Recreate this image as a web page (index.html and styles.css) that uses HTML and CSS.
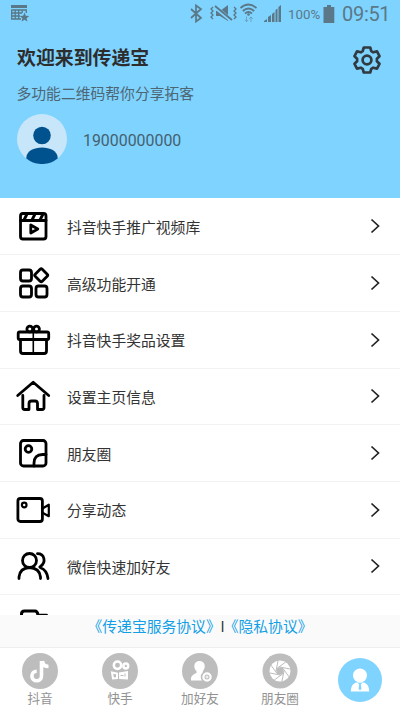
FILE: index.html
```html
<!DOCTYPE html>
<html lang="zh-CN">
<head>
<meta charset="utf-8">
<title>传递宝</title>
<link rel="stylesheet" href="styles.css">
</head>
<body>
<div class="screen">
  <header class="hero">
    <div class="status">
      <svg class="status-left" viewBox="0 0 20 20" width="20" height="20"><path d="M1 1h16v3H1z"/><path d="M1.700 5.500v9.500H11M1.700 6h14.600v3M1.700 9H12M1.700 12H10M5.200 6v9M8.700 6v9M12.200 6v3" fill="none" stroke="currentColor" stroke-width="1.300"/><path d="m14.500 8.500 1.300 3.200 3.400.2-2.600 2.300.8 3.400-2.900-1.900-2.900 1.900.8-3.400-2.600-2.300 3.400-.2z"/></svg>
      <svg class="status-icons" viewBox="188 0 100 28" width="100" height="28">
        <path d="m191 9 10 9-5 3.500v-16l5 3.500-10 9" fill="none" stroke="currentColor" stroke-width="1.700"/>
        <path d="M216 11h4l8-6v16l-8-5h-4z"/>
        <path d="m214.500 6.500 17 14" stroke="#7fd3ff" stroke-width="4"/>
        <path d="m215 6 17 14" stroke="currentColor" stroke-width="1.800"/>
        <path d="m213 7-2 2 2 2-2 2 2 2-2 2 2 2M234 7l2 2-2 2 2 2-2 2 2 2-2 2" fill="none" stroke="currentColor" stroke-width="1.300"/>
        <path d="M240.500 8q8-7 16 0M242.800 11q5.700-5 11.400 0M245 13.500q3.500-3 7 0" fill="none" stroke="currentColor" stroke-width="1.700"/><circle cx="248.500" cy="14.500" r="1.300"/>
        <path d="M246.500 16.500v5m-1.800-1.700 1.800 1.800 1.800-1.800M251 22v-5m-1.800 1.700L251 17l1.800 1.700" fill="none" stroke="currentColor" opacity=".5"/>
        <path d="M264 22v-1l3-2v3zM268 22v-5l3-2v7zM272 22v-8l2.500-2v10zM275.500 22V10l2-1.500V22zM278.500 22V7l2.500-2v17z"/>
      </svg>
      <span class="battery-text">100%</span>
      <svg class="battery" viewBox="0 0 12 18" width="12" height="18"><path d="M4 0h4v2h3.300v16H.5V2H4z"/></svg>
      <span class="clock">09:51</span>
    </div>
    <div class="title-row">
      <h1>欢迎来到传递宝</h1>
      <svg class="gear" viewBox="-15 -15 30 30" width="30" height="30"><path d="M-3.200-12.500H3.200L4.300-8.800 6.200-7.700 10-8.600 12.500-3.800 9.900-1.200V1.200L12.500 3.800 10 8.600 6.200 7.700 4.300 8.800 3.200 12.500H-3.200L-4.300 8.800-6.200 7.700-10 8.600-12.500 3.800-9.900 1.200V-1.200L-12.500-3.800-10-8.600-6.200-7.700-4.300-8.800Z"/><circle r="4.400"/></svg>
    </div>
    <p class="subtitle">多功能二维码帮你分享拓客</p>
    <div class="account">
      <svg viewBox="0 0 50 50" width="50" height="50"><circle cx="25" cy="25" r="25" fill="#c8e6fa"/><circle cx="25" cy="21.500" r="8.800" fill="#00528f"/><path d="M9.300 44.500C9 37 17 33.500 25 33.500S41 37 40.700 44.500A25 25 0 0 1 9.300 44.500Z" fill="#00528f"/></svg>
      <span>19000000000</span>
    </div>
  </header>

  <main class="menu">
    <div class="row"><svg class="icon" viewBox="0 0 36 36"><rect x="5.500" y="5.500" width="25.500" height="25.500" rx="2.500"/><path d="M5.500 12.500H31M12 6l-3 6M20 6l-3 6M28 6l-3 6M15.800 17v8l7-4z"/></svg><span>抖音快手推广视频库</span><svg class="chevron" viewBox="0 0 10 16"><path d="m1.500 1.500 7 6.500-7 6.500"/></svg></div>
    <div class="row"><svg class="icon" viewBox="0 0 36 36"><rect x="5.500" y="5" width="11" height="11" rx="2.500"/><rect x="5.500" y="21" width="11" height="11" rx="2.500"/><rect x="21" y="21" width="11" height="11" rx="2.500"/><rect x="21.200" y="5.200" width="10" height="10" rx="1.500" transform="rotate(45 26.200 10.200)"/></svg><span>高级功能开通</span><svg class="chevron" viewBox="0 0 10 16"><path d="m1.500 1.500 7 6.500-7 6.500"/></svg></div>
    <div class="row"><svg class="icon" viewBox="0 0 36 36"><rect x="3.200" y="10" width="30.500" height="7.500" rx="1.500"/><path d="M5.500 17.500V29q0 2.500 2.500 2.500h21q2.500 0 2.500-2.500V17.500"/><path class="thin" d="M18.300 10v21.500"/><circle cx="14.800" cy="7" r="2.900"/><circle cx="21.500" cy="7" r="2.900"/></svg><span>抖音快手奖品设置</span><svg class="chevron" viewBox="0 0 10 16"><path d="m1.500 1.500 7 6.500-7 6.500"/></svg></div>
    <div class="row"><svg class="icon" viewBox="0 0 36 36"><path d="M2.700 17.500 18.200 4.200l15.500 13.300M7.800 17.500v12q0 2 2 2H14v-6q0-2.500 2.500-2.500h3.500q2.500 0 2.500 2.500v6H27q2 0 2-2v-12"/></svg><span>设置主页信息</span><svg class="chevron" viewBox="0 0 10 16"><path d="m1.500 1.500 7 6.500-7 6.500"/></svg></div>
    <div class="row"><svg class="icon" viewBox="0 0 36 36"><rect x="5.500" y="5.500" width="25.500" height="25.500" rx="3"/><circle cx="13.500" cy="14" r="3.300"/><path d="M19 31V28q0-8.500 8.500-8.500H31"/></svg><span>朋友圈</span><svg class="chevron" viewBox="0 0 10 16"><path d="m1.500 1.500 7 6.500-7 6.500"/></svg></div>
    <div class="row"><svg class="icon" viewBox="0 0 36 36"><rect x="2.900" y="6.500" width="24.500" height="23" rx="2.500"/><circle class="mid" cx="9.200" cy="13" r="2.300"/><path class="mid" d="m27.500 16.500 6.300-3.800v11.500l-6.300-3.500"/></svg><span>分享动态</span><svg class="chevron" viewBox="0 0 10 16"><path d="m1.500 1.500 7 6.500-7 6.500"/></svg></div>
    <div class="row"><svg class="icon" viewBox="0 0 36 36"><circle cx="14.500" cy="12.500" r="7"/><path d="M4 30.500V29q1-9 10.500-9.500Q24.500 20 25.500 29v1.500M22.500 5.700c7 0 9 8.500 3 12.600-1 .7-1 1 0 1.400Q32 22 33 30.500"/></svg><span>微信快速加好友</span><svg class="chevron" viewBox="0 0 10 16"><path d="m1.500 1.500 7 6.500-7 6.500"/></svg></div>
    <div class="row"><svg class="icon" viewBox="0 0 36 36"><path class="heavy" d="M6.500 22V9Q6.500 6 9.500 6H20Q22.500 6 23 10.200h8.500"/></svg></div>
  </main>

  <div class="terms"><a>《传递宝服务协议》</a><span>l</span><a>《隐私协议》</a></div>

  <nav class="tabs">
    <div class="tab"><svg viewBox="0 0 36 36"><circle class="disc" cx="18" cy="18" r="18"/><path d="M19.500 8v15a4.800 4.800 0 1 1-4.800-4.800M20.500 8c.3 3.500 2.500 5.500 6 5.500" fill="none" stroke="#fff" stroke-width="3.600"/></svg><span>抖音</span></div>
    <div class="tab"><svg viewBox="0 0 36 36"><circle class="disc" cx="18" cy="18" r="18"/><g fill="none" stroke="#fff" stroke-width="2.500"><circle cx="15.500" cy="12.300" r="3.700"/><circle cx="23.800" cy="13" r="2.400"/></g><path d="m10 19.500 5 1v4.500l-4 .5z" fill="none" stroke="#fff" stroke-width="2"/><path fill="#fff" d="M17 19.500 26 18v8.500l-9-.5z"/><path d="M18.500 22.500h3M23 20.500v3" stroke="#bdbdbd"/></svg><span>快手</span></div>
    <div class="tab"><svg viewBox="0 0 36 36"><circle class="disc" cx="18" cy="18" r="18"/><path fill="#fff" d="M17.500 8c6 0 6.500 7 3.400 10v2c3 1 4 2 4 4v3.500H9V25q.5-3 5.500-5v-2C11 15 11.500 8 17.500 8z"/><circle cx="25" cy="24" r="5.500" fill="#fff" stroke="#bdbdbd" stroke-width="1.500"/><circle cx="25" cy="24" r="2.500" fill="#bdbdbd"/><path d="M23.500 24h3M25 22.500v3" stroke="#fff"/></svg><span>加好友</span></div>
    <div class="tab"><svg viewBox="0 0 36 36"><circle class="disc" cx="18" cy="18" r="17.500"/><circle cx="18" cy="18" r="10.500" fill="#fff"/><circle cx="18" cy="18" r="3.700" fill="#bdbdbd"/><path d="M14 18 16 8M15.200 15.200 23.500 9.200M18 14l10 2M20.800 15.200l6 8.300M22 18l-2 10M20.800 20.800l-8.300 6M18 22 8 20M15.200 20.800l-6-8.300" stroke="#bdbdbd" stroke-width="1"/></svg><span>朋友圈</span></div>
    <div class="tab active"><svg viewBox="0 0 44 44"><circle cx="22" cy="22" r="22" fill="#7fd3ff"/><circle cx="22" cy="17.500" r="7" fill="#fff"/><path fill="#fff" d="M12.800 33.500c.2-5 2-8.500 6.200-9h6c4.200.5 6 4 6.200 9z"/><path d="M20 25h4l-1.200 1.500.7 4-1.500 2-1.500-2 .7-4z" fill="#7fd3ff"/></svg></div>
  </nav>
</div>
</body>
</html>
```

FILE: styles.css
```css
* { box-sizing: border-box; }
body {
  margin: 0;
  font-family: Roboto, "Noto Sans CJK SC", sans-serif;
  background: #fff;
  color: #333;
}
.screen {
  width: 400px;
  height: 711px;
  display: flex;
  flex-direction: column;
  overflow: hidden;
}
.hero {
  height: 198px;
  flex: none;
  background: #7fd3ff;
}
.status {
  display: flex;
  align-items: center;
  height: 28px;
  padding: 0 11px 0 10px;
  color: #5a7887;
}
.status svg { fill: currentColor; flex: none; }
.status-icons { margin-left: auto; }
.battery-text { width: 31px; font-size: 13.3px; white-space: nowrap; }
.battery { margin: 0 7px 0 4px; }
.clock { width: 47px; font-size: 20px; line-height: 28px; letter-spacing: -.3px; white-space: nowrap; }
.title-row {
  display: flex;
  justify-content: space-between;
  align-items: center;
  height: 60px;
  padding: 0 18px 0 17px;
}
h1 { margin: 2px 0 0; font-size: 18.9px; line-height: 30px; font-weight: 700; color: #2d2d2d; }
.gear { fill: none; stroke: #303a40; stroke-width: 2.7; stroke-linejoin: round; margin-top: 4px; }
.subtitle { margin: -6px 0 0 16.5px; font-size: 14.8px; line-height: 24px; color: #4d6673; }
.account {
  display: flex;
  align-items: center;
  gap: 16px;
  margin: 8px 0 0 17px;
  font-size: 15.9px;
  color: #44616e;
}
.account span { margin-top: 2px; }
.menu { height: 417px; flex: none; overflow: hidden; padding-top: .6px; }
.row {
  display: flex;
  align-items: center;
  height: 56.67px;
  padding: 0 20px 0 15px;
  border-bottom: 1px solid #f2f2f2;
  font-size: 14.8px;
}
.icon {
  width: 36px;
  height: 36px;
  margin-right: 16px;
  flex: none;
  fill: none;
  stroke: #000;
  stroke-width: 2.8;
  stroke-linecap: round;
  stroke-linejoin: round;
}
.thin { stroke-width: 1.6; }
.mid { stroke-width: 2.2; }
.heavy { stroke-width: 3; }
.chevron {
  width: 10px;
  height: 16px;
  margin-left: auto;
  fill: none;
  stroke: #222;
  stroke-width: 1.7;
}
.terms {
  display: flex;
  justify-content: center;
  height: 33px;
  flex: none;
  border-bottom: 1px solid #eee;
  background: #fafafa;
  font-size: 14.8px;
  line-height: 24px;
}
.terms a { color: #129fe6; }
.terms span { width: 3px; }
.tabs { display: grid; grid-template-columns: repeat(5, 80px); height: 63px; }
.tab {
  display: flex;
  flex-direction: column;
  align-items: center;
  padding-top: 5px;
  font-size: 12.6px;
  line-height: 19px;
  color: #929292;
}
.tab svg { width: 36px; height: 36px; }
.disc { fill: #bdbdbd; }
.active { padding-top: 10px; }
.active svg { width: 44px; height: 44px; }
```
